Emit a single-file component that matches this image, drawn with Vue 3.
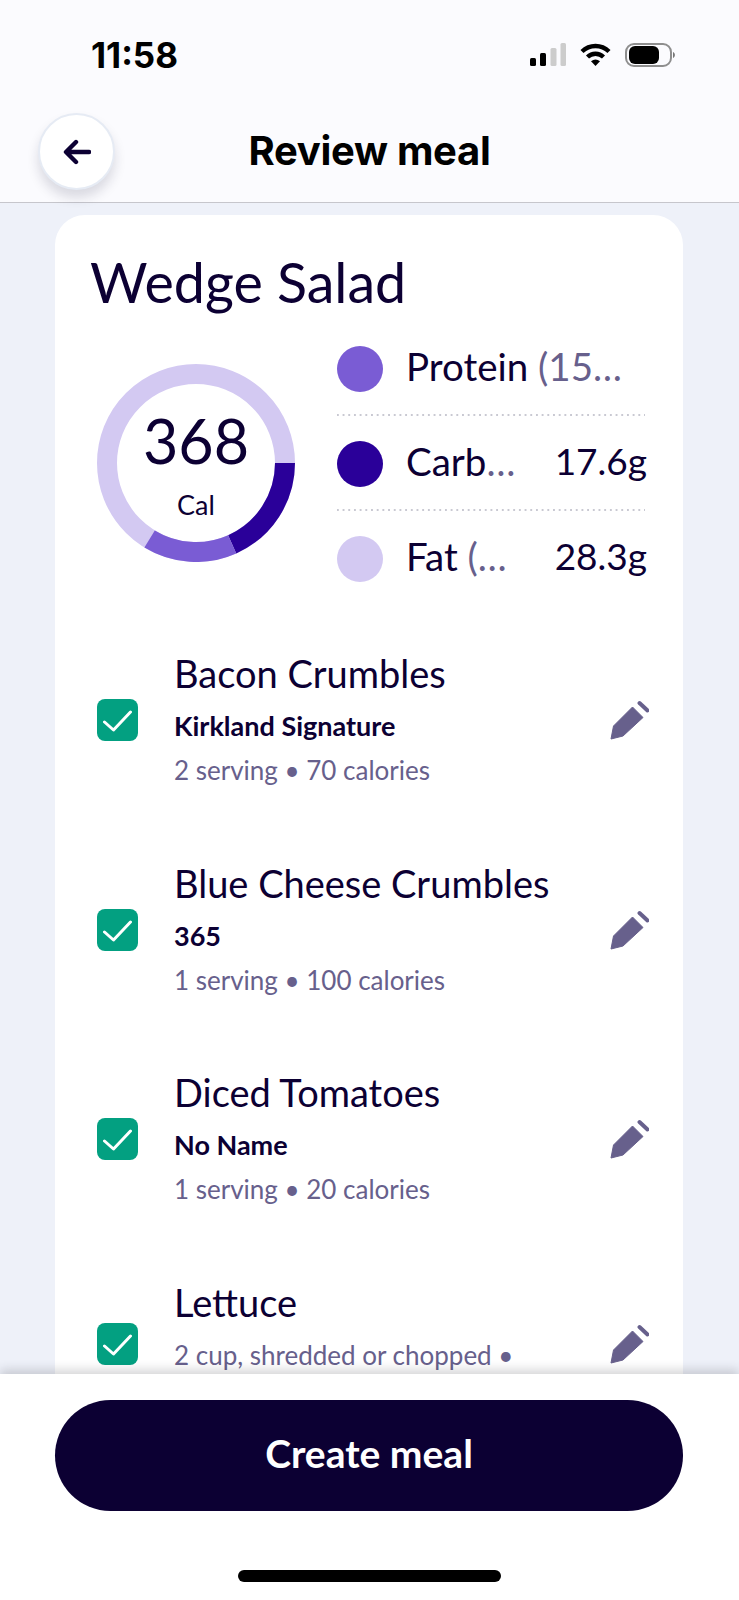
<script setup>
const items = [
  { name: 'Bacon Crumbles', brand: 'Kirkland Signature', meta: '2 serving • 70 calories' },
  { name: 'Blue Cheese Crumbles', brand: '365', meta: '1 serving • 100 calories' },
  { name: 'Diced Tomatoes', brand: 'No Name', meta: '1 serving • 20 calories' },
  { name: 'Lettuce', brand: '', meta: '2 cup, shredded or chopped •' },
]
</script>

<template>
  <div class="screen">
    <header class="top">
      <div class="status">
        <span class="time">11:58</span>
        <div class="status-icons">
          <svg width="36" height="23" viewBox="0 0 36 23">
            <rect x="0" y="15" width="6" height="8" rx="1.5" fill="#000" />
            <rect x="10" y="10" width="6" height="13" rx="1.5" fill="#000" />
            <rect x="20.5" y="5" width="6" height="18" rx="1.5" fill="#ccc" />
            <rect x="30.5" y="0" width="5.5" height="23" rx="1.5" fill="#ccc" />
          </svg>
          <svg width="31" height="23" viewBox="0 0 31 23">
            <path d="M2 8.500a19.500 19.500 0 0 1 27 0M7.500 14a11.500 11.500 0 0 1 16 0" fill="none" stroke="#000" stroke-width="4.4" />
            <path d="M11 18.300q4.500-3.800 9 0l-4.500 4.700z" fill="#000" />
          </svg>
          <svg width="51" height="24" viewBox="0 0 51 24">
            <rect x="1" y="1" width="45" height="22" rx="8" fill="none" stroke="#8e8e8e" stroke-width="2" />
            <rect x="4" y="3" width="30" height="18" rx="6" fill="#000" />
            <path d="M48 9c2.500 1 2.500 5 0 6z" fill="#777" />
          </svg>
        </div>
      </div>
      <div class="navbar">
        <button class="back">
          <svg width="28" height="26" viewBox="0 0 28 26">
            <path d="M13 3 3 13l10 10M4 13h22" fill="none" stroke="#0c0033" stroke-width="4.4" stroke-linecap="round" stroke-linejoin="round" />
          </svg>
        </button>
        <h1 class="nav-title">Review meal</h1>
      </div>
    </header>

    <main class="scroll">
      <section class="card">
        <h2 class="meal">Wedge Salad</h2>
        <div class="summary">
          <div class="ring-box">
            <svg class="ring" width="198" height="198" viewBox="0 0 198 198">
              <circle cx="99" cy="99" r="89" fill="none" stroke="#d3c9f2" stroke-width="20" />
              <path d="M188 99A89 89 0 0 1 135.200 180.300" fill="none" stroke="#2a0099" stroke-width="20" />
              <path d="M135.200 180.300A89 89 0 0 1 52.600 175" fill="none" stroke="#7a5cd4" stroke-width="20" />
            </svg>
            <div class="ring-text">
              <span class="cal-num">368</span>
              <span class="cal-lbl">Cal</span>
            </div>
          </div>
          <ul class="legend">
            <li class="macro">
              <i class="dot protein"></i>
              <span class="macro-name">Protein <em>(15…</em></span>
            </li>
            <li class="macro">
              <i class="dot carb"></i>
              <span class="macro-name">Carb<em>…</em></span>
              <span class="macro-val">17.6g</span>
            </li>
            <li class="macro">
              <i class="dot fat"></i>
              <span class="macro-name">Fat <em>(…</em></span>
              <span class="macro-val">28.3g</span>
            </li>
          </ul>
        </div>

        <div class="food-list">
          <article v-for="it in items" :key="it.name" class="food" :class="{ 'no-brand': !it.brand }">
            <span class="check">
              <svg width="30" height="26" viewBox="0 0 30 26">
                <path d="M1.500 15l9 8L27.500 5" fill="none" stroke="#fff" stroke-width="3" stroke-linecap="round" stroke-linejoin="round" />
              </svg>
            </span>
            <div class="food-text">
              <div class="food-name">{{ it.name }}</div>
              <div v-if="it.brand" class="food-brand">{{ it.brand }}</div>
              <div class="food-meta">{{ it.meta }}</div>
            </div>
            <svg class="pencil" width="40" height="40" viewBox="0 0 40 40">
              <path d="M2 39l2.500-13L23.500 7 34 17.500 14 36z" fill="#67608c" stroke="#67608c" stroke-linejoin="round" />
              <path d="M30.500 3l8 7.500" stroke="#67608c" stroke-width="4" stroke-linecap="round" />
            </svg>
          </article>
        </div>
      </section>
    </main>

    <footer class="bottom">
      <button class="cta">Create meal</button>
      <div class="home"></div>
    </footer>
  </div>
</template>

<style>
html, body { margin: 0; background: #eef1f9; }
</style>

<style scoped>
.screen {
  width: 739px;
  height: 1600px;
  display: flex;
  flex-direction: column;
  overflow: hidden;
  background: #eef1f9;
  font-family: "Lato", "Noto Sans", sans-serif;
  color: #0c0033;
}
.top {
  height: 203px;
  flex: none;
  box-sizing: border-box;
  background: #fbfbfe;
  border-bottom: 1px solid #c6c6cc;
  position: relative;
  z-index: 2;
}
.status {
  height: 100px;
  padding: 9px 63px 0 91px;
  display: flex;
  align-items: center;
  justify-content: space-between;
  box-sizing: border-box;
}
.time {
  font: 700 35px "Inter", sans-serif;
  color: #000;
}
.status-icons { display: flex; align-items: center; gap: 14px; }
.navbar {
  position: relative;
  display: flex;
  justify-content: center;
  padding-top: 26px;
}
.back {
  position: absolute;
  left: 38px;
  top: 13px;
  width: 77px;
  height: 77px;
  border-radius: 50%;
  border: 2px solid #e6ebf4;
  background: #fff;
  box-shadow: 0 8px 12px rgba(30, 30, 60, .15);
  display: flex;
  align-items: center;
  justify-content: center;
  padding: 0;
}
.nav-title {
  margin: 0;
  font: 700 40px/50px "Inter", sans-serif;
  color: #000;
  letter-spacing: -.3px;
}
.scroll {
  flex: 1;
  min-height: 0;
  overflow: hidden;
  padding: 12px 56px 0 55px;
}
.card {
  background: #fff;
  border-radius: 30px 30px 0 0;
  padding: 34px 34px 0 36px;
  height: 1300px;
  box-sizing: border-box;
}
.meal {
  margin: 0 0 0 -1px;
  font-weight: 400;
  font-size: 55.6px;
  line-height: 66px;
}
.summary {
  display: flex;
  align-items: flex-start;
  margin-top: 6px;
  margin-left: 6px;
  gap: 42px;
}
.ring-box { position: relative; width: 198px; height: 198px; flex: none; margin-top: 43px; }
.ring { display: block; }
.ring-text {
  position: absolute;
  inset: 0;
  display: flex;
  flex-direction: column;
  align-items: center;
  padding-top: 37px;
}
.cal-num { font-size: 61px; line-height: 80px; }
.cal-lbl { font-size: 27px; line-height: 30px; margin-top: 9px; }
.legend { list-style: none; margin: 0; padding: 0; width: 308px; }
.macro {
  height: 95px;
  display: flex;
  align-items: center;
  font-size: 38.5px;
  box-sizing: border-box;
  background: radial-gradient(circle, #c9c9d2 1px, transparent 1.3px) -2px bottom / 5.700px 2px repeat-x;
}
.macro:last-child { background: none; }
.dot { width: 46px; height: 46px; border-radius: 50%; flex: none; margin-right: 23px; }
.protein { background: #7a5cd4; }
.carb { background: #2a0099; }
.fat { background: #d3c9f2; }
.macro-name { flex: 1; white-space: nowrap; margin-bottom: 6px; }
.macro-name em { font-style: normal; color: #67608c; }
.macro-val { flex: none; font-size: 37px; margin-right: -2px; margin-bottom: 6px; }
.food-list { margin-top: 41px; display: flex; flex-direction: column; margin-left: 6px; }
.food {
  height: 209.5px;
  display: flex;
  align-items: flex-start;
}
.check {
  width: 41px;
  height: 42px;
  border-radius: 8px;
  background: #03a081;
  flex: none;
  display: flex;
  align-items: center;
  justify-content: center;
  margin-top: 52px;
  margin-right: 36px;
}
.no-brand .check { margin-top: 47px; }
.food-text { flex: 1; min-width: 0; }
.food-name { font-size: 38px; line-height: 52px; }
.food-brand { font-size: 27px; font-weight: 700; line-height: 34px; margin-top: 10px; }
.food-meta { font-size: 26px; line-height: 34px; color: #67608c; margin-top: 10px; }
.pencil { flex: none; margin-top: 53px; }
.no-brand .pencil { margin-top: 48px; }
.bottom {
  height: 226px;
  flex: none;
  box-sizing: border-box;
  background: #fff;
  position: relative;
  z-index: 2;
  box-shadow: 0 -4px 10px rgba(40, 40, 50, .2);
  padding: 26px 56px 0 55px;
}
.cta {
  display: block;
  width: 100%;
  height: 111px;
  border: 0;
  border-radius: 56px;
  background: #0c0033;
  color: #fff;
  font: 700 39px "Lato", sans-serif;
  padding: 0 0 6px;
}
.home {
  width: 263px;
  height: 12px;
  border-radius: 6px;
  background: #000;
  margin: 59px auto 0;
}
</style>
